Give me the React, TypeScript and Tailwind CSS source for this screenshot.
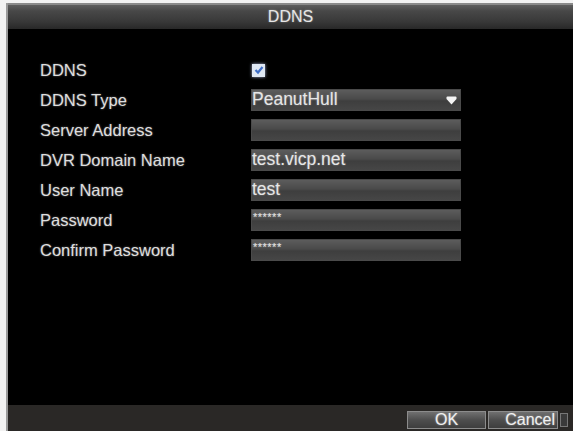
import React from "react";

const font = { fontFamily: '"Liberation Sans", Arial, sans-serif' };

function Field({ children }: { children?: React.ReactNode }) {
  return (
    <div className="relative flex h-[22px] w-[210px] items-center border border-[#4a4a4a] bg-[linear-gradient(#5c5c5c,#4a4a4a_45%,#3e3e3e_55%,#464646)] text-[17.5px] leading-none text-[#e6e6e6] [text-shadow:0_0_2px_rgba(255,255,255,0.4)]">
      {children}
    </div>
  );
}

function Row({ label, children }: { label: string; children: React.ReactNode }) {
  return (
    <div className="flex h-[22px] items-center">
      <div className="w-[211px] text-[16.5px] leading-none text-[#dedede] [text-shadow:0_0_2px_rgba(255,255,255,0.45)]">
        {label}
      </div>
      {children}
    </div>
  );
}

export default function App() {
  return (
    <div className="h-[431px] w-[573px] overflow-hidden bg-[#f2f2f2] pl-[6px] pt-[3px]" style={font}>
      <div className="flex h-full flex-col border-l-2 border-[#9a9a9a] bg-black">
        <div className="flex h-[26px] items-center justify-center border-t-2 border-[#8a8a8a] bg-[linear-gradient(#5e5e5e,#484848_25%,#383838_70%,#282828)] text-[16px] leading-none text-[#e6e6e6] [text-shadow:0_0_2px_rgba(255,255,255,0.4)]">
          DDNS
        </div>
        <div className="flex flex-1 flex-col gap-[8px] pl-[32px] pt-[30px]">
          <Row label="DDNS">
            <div className="ml-[1px] flex h-[13px] w-[13px] items-center justify-center bg-[#dfe8f4] shadow-[0_0_3px_rgba(200,215,255,0.8)]">
              <svg width="10" height="10" viewBox="0 0 10 10">
                <path d="M1.5 5 L4 7.5 L8.5 2" stroke="#3f6fc8" strokeWidth="2.2" fill="none" />
              </svg>
            </div>
          </Row>
          <Row label="DDNS Type">
            <Field>
              <span>PeanutHull</span>
              <svg className="absolute right-[3px] top-[6px]" width="11" height="9" viewBox="0 0 11 9">
                <path d="M0.5 1.5 Q0.5 0.5 1.5 0.5 L9.5 0.5 Q10.5 0.5 10.5 1.5 L10.5 3 L5.5 8.5 L0.5 3 Z" fill="#f4f4f4" />
              </svg>
            </Field>
          </Row>
          <Row label="Server Address">
            <Field />
          </Row>
          <Row label="DVR Domain Name">
            <Field>test.vicp.net</Field>
          </Row>
          <Row label="User Name">
            <Field>test</Field>
          </Row>
          <Row label="Password">
            <Field>
              <span className="self-start pl-[1px] pt-[2px] text-[11px] tracking-[0.5px]">******</span>
            </Field>
          </Row>
          <Row label="Confirm Password">
            <Field>
              <span className="self-start pl-[1px] pt-[2px] text-[11px] tracking-[0.5px]">******</span>
            </Field>
          </Row>
        </div>
        <div className="flex h-[26px] items-center justify-end gap-[2px] bg-[#2a2826] pr-[5px] pt-[3px]">
          <div className="flex h-[18px] w-[79px] items-center justify-center border border-[#8c8c8c] bg-[linear-gradient(#707070,#4e4e4e_50%,#3e3e3e)] text-[16px] leading-none text-[#f0f0f0] [text-shadow:0_0_2px_rgba(255,255,255,0.5)]">
            OK
          </div>
          <div className="flex h-[18px] w-[70px] items-center justify-end border border-[#8c8c8c] bg-[linear-gradient(#707070,#4e4e4e_50%,#3e3e3e)] pr-[2px] text-[16px] leading-none text-[#f0f0f0] [text-shadow:0_0_2px_rgba(255,255,255,0.5)]">
            Cancel
          </div>
          <div className="h-[14px] w-[8px] border border-[#777] bg-[#3a3a3a]" />
        </div>
      </div>
    </div>
  );
}
